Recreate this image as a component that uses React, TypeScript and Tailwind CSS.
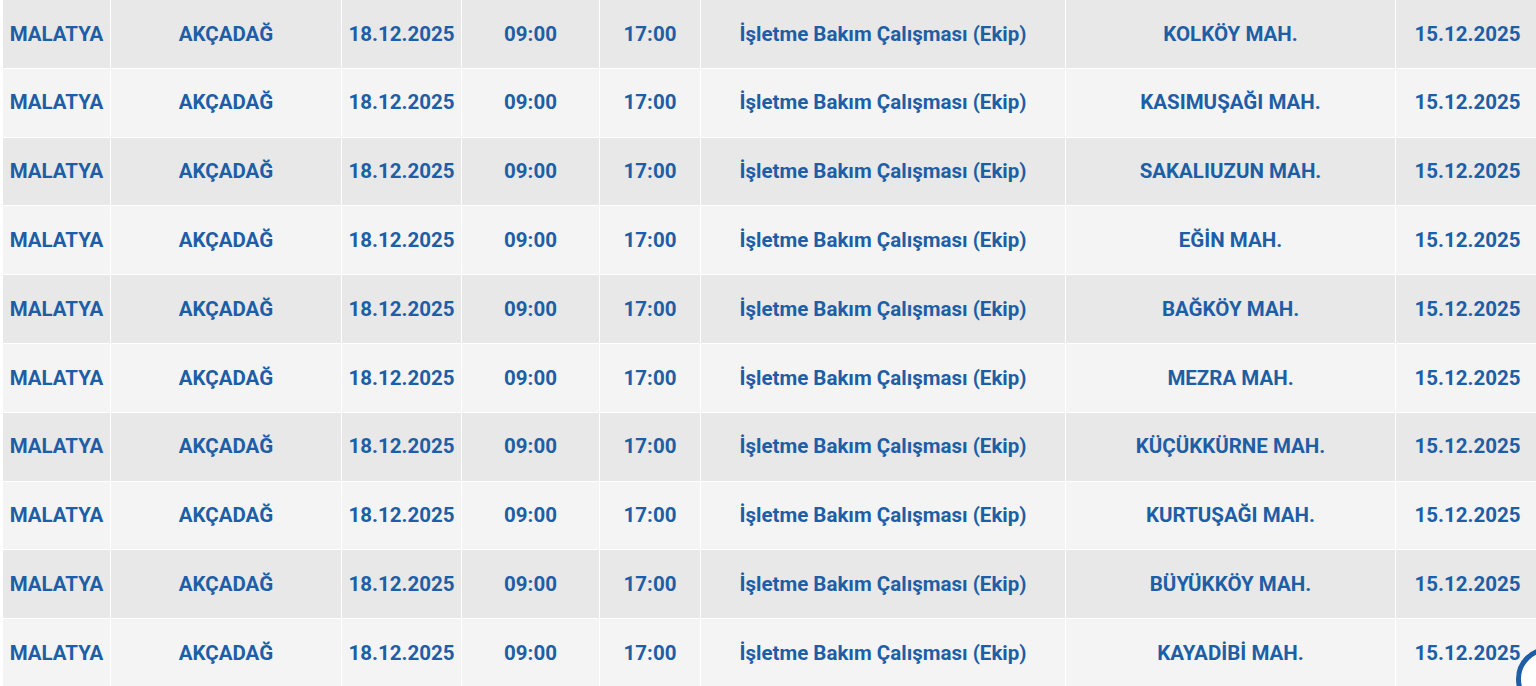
import React from 'react'

const places = [
  'KOLKÖY MAH.',
  'KASIMUŞAĞI MAH.',
  'SAKALIUZUN MAH.',
  'EĞİN MAH.',
  'BAĞKÖY MAH.',
  'MEZRA MAH.',
  'KÜÇÜKKÜRNE MAH.',
  'KURTUŞAĞI MAH.',
  'BÜYÜKKÖY MAH.',
  'KAYADİBİ MAH.',
]

const App = () => {
  return (
    <div className="relative h-[686px] w-[1536px] overflow-hidden bg-white pl-[2px] font-['Roboto',sans-serif]">
      <table className="-mt-[1px] w-[1537px] table-fixed border-collapse text-[20.5px] font-bold text-[#1d5ea6]">
        <colgroup>
          <col className="w-[108px]" />
          <col className="w-[231px]" />
          <col className="w-[120px]" />
          <col className="w-[138px]" />
          <col className="w-[101px]" />
          <col className="w-[365px]" />
          <col className="w-[330px]" />
          <col className="w-[144px]" />
        </colgroup>
        <tbody>
          {places.map((place, idx) => (
            <tr
              key={place}
              className={idx % 2 === 0 ? 'h-[68.8px] bg-[#e8e8e8]' : 'h-[68.8px] bg-[#f4f4f4]'}
            >
              <td className="border border-white text-center">MALATYA</td>
              <td className="border border-white text-center">AKÇADAĞ</td>
              <td className="border border-white text-center">18.12.2025</td>
              <td className="border border-white text-center">09:00</td>
              <td className="border border-white text-center">17:00</td>
              <td className="border border-white text-center">İşletme Bakım Çalışması (Ekip)</td>
              <td className="border border-white text-center">{place}</td>
              <td className="border border-white text-center">15.12.2025</td>
            </tr>
          ))}
        </tbody>
      </table>
      {/* floating round button, mostly off-screen */}
      <div className="absolute left-[1516px] top-[647px] h-[64px] w-[64px] rounded-full border-[5px] border-[#1d5ea6] bg-white" />
    </div>
  )
}

export default App
